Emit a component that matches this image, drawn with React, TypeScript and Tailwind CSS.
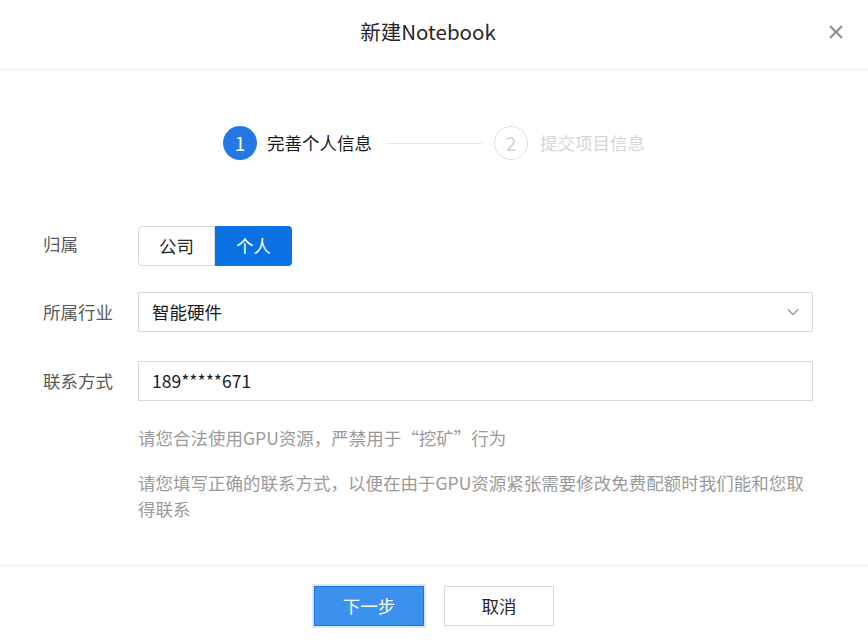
import React from "react";

const font = { fontFamily: '"Noto Sans CJK SC", "Noto Sans", sans-serif' };

export default function App() {
  return (
    <div className="w-[868px] h-[640px] bg-white flex flex-col text-[#262626]" style={font}>
      {/* Header */}
      <div className="h-[70px] border-b border-[#ebebeb] flex items-center justify-center relative shrink-0 pr-[12px]">
        <div className="text-[20.5px] text-[#262626] -mt-[6px]">新建Notebook</div>
        <button className="absolute right-[24px] top-[24px] w-[16px] h-[16px] flex items-center justify-center">
          <svg width="16" height="16" viewBox="0 0 16 16" fill="none">
            <path d="M2 2L14 14M14 2L2 14" stroke="#8c8c8c" strokeWidth="2" />
          </svg>
        </button>
      </div>

      {/* Body */}
      <div className="flex-1 flex flex-col">
        {/* Steps */}
        <div className="mt-[56px] h-[34px] flex items-center justify-center">
          <div className="flex items-center">
            <div className="w-[34px] h-[34px] rounded-full bg-[#2478e4] text-white flex items-center justify-center text-[19px]">1</div>
            <div className="ml-[10px] text-[17.5px] text-[#1a1a1a]">完善个人信息</div>
            <div className="ml-[14px] mr-[12px] w-[96px] h-px bg-[#e6e6e6]" />
            <div className="w-[34px] h-[34px] rounded-full border border-[#e0e0e0] text-[#d3d3d3] flex items-center justify-center text-[19px]">2</div>
            <div className="ml-[12px] text-[17.5px] text-[#d6d6d6]">提交项目信息</div>
          </div>
        </div>

        {/* Form */}
        <div className="pl-[43px] pr-[55px] text-[17.5px]">
          <div className="mt-[66px] flex items-center h-[40px]">
            <div className="w-[95px] text-[#595959] -mt-[4px]">归属</div>
            <div className="flex h-[40px]">
              <div className="w-[77px] border border-[#d9d9d9] rounded-l-[4px] flex items-center justify-center text-[#262626]">公司</div>
              <div className="w-[77px] bg-[#0a72e3] rounded-r-[4px] flex items-center justify-center text-white">个人</div>
            </div>
          </div>

          <div className="mt-[26px] flex items-center h-[40px]">
            <div className="w-[95px] text-[#595959]">所属行业</div>
            <div className="flex-1 h-[40px] border border-[#d9d9d9] flex items-center justify-between pl-[13px] pr-[12px]">
              <span className="text-[#1a1a1a]">智能硬件</span>
              <svg width="14" height="14" viewBox="0 0 14 14" fill="none">
                <path d="M2 4.5L7 9.5L12 4.5" stroke="#9a9a9a" strokeWidth="1.4" />
              </svg>
            </div>
          </div>

          <div className="mt-[29px] flex items-center h-[40px]">
            <div className="w-[95px] text-[#595959]">联系方式</div>
            <div className="flex-1 h-[40px] border border-[#d9d9d9] flex items-center pl-[13px]">
              <span className="text-[#1a1a1a]">189*****671</span>
            </div>
          </div>

          <div className="ml-[95px] mt-[24px] text-[#9a9a9a] leading-[26px]">
            <p>请您合法使用GPU资源，严禁用于“挖矿”行为</p>
            <p className="mt-[19px]">请您填写正确的联系方式，以便在由于GPU资源紧张需要修改免费配额时我们能和您取得联系</p>
          </div>
        </div>
      </div>

      {/* Footer */}
      <div className="h-[75px] border-t border-[#ebebeb] shrink-0 flex justify-center pt-[20px] gap-[20px]">
        <button className="w-[110px] h-[40px] bg-[#3a91ee] border border-[#1a73e8] ring-2 ring-[#d6e8fb] text-white text-[17.5px] flex items-center justify-center">下一步</button>
        <button className="w-[110px] h-[40px] bg-white border border-[#d9d9d9] text-[#262626] text-[17.5px] flex items-center justify-center">取消</button>
      </div>
    </div>
  );
}
